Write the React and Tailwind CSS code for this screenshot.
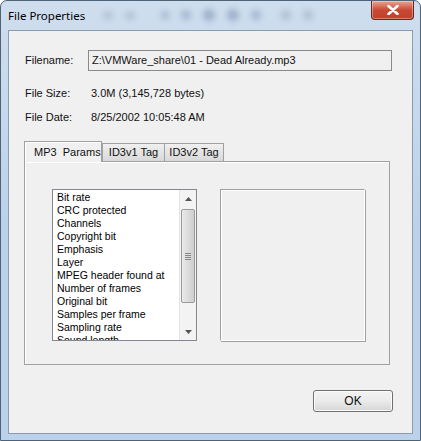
import React from 'react';

const items = [
  'Bit rate',
  'CRC protected',
  'Channels',
  'Copyright bit',
  'Emphasis',
  'Layer',
  'MPEG header found at',
  'Number of frames',
  'Original bit',
  'Samples per frame',
  'Sampling rate',
  'Sound length',
];

const Scrollbar = () => (
  <div className="flex flex-col w-[17px] h-full bg-[#f3f3f3] border-l border-[#e6e6e6]">
    <div className="h-[17px] flex items-center justify-center">
      <svg width="7" height="4" viewBox="0 0 7 4"><path d="M3.5 0L7 4H0z" fill="#555" /></svg>
    </div>
    <div className="mx-[1px] mt-[2px] h-[94px] rounded-[2px] border border-[#9a9a9a] bg-gradient-to-r from-[#eaeaea] via-[#dcdcdc] to-[#cfcfcf] flex flex-col items-center justify-center gap-[1px]">
      <div className="w-[6px] h-[1px] bg-[#888]" />
      <div className="w-[6px] h-[1px] bg-[#888]" />
      <div className="w-[6px] h-[1px] bg-[#888]" />
      <div className="w-[6px] h-[1px] bg-[#888]" />
    </div>
    <div className="flex-1" />
    <div className="h-[17px] flex items-center justify-center">
      <svg width="7" height="4" viewBox="0 0 7 4"><path d="M0 0H7L3.5 4z" fill="#555" /></svg>
    </div>
  </div>
);

const Tab = ({ label, active }) =>
  active ? (
    <div className="relative z-10 w-[78px] h-[21px] -mb-[1px] border border-b-0 border-[#a0a0a0] bg-[#f0f0f0] shadow-[inset_1px_1px_0_#fff] flex items-center pl-[9px] whitespace-pre">
      {label}
    </div>
  ) : (
    <div className="w-[63px] h-[18px] border border-b-0 border-[#a0a0a0] bg-gradient-to-b from-[#f0f0f0] to-[#d8d8d8] flex items-center justify-center whitespace-pre">
      {label}
    </div>
  );

export default function App() {
  return (
    <div
      className="w-[421px] h-[441px] flex flex-col rounded-t-[7px] border border-[#4f6378] bg-gradient-to-b from-[#cfdeee] via-[#bcd2ea] to-[#bcd2ea] overflow-hidden"
      style={{ fontFamily: '"Liberation Sans", Arial, sans-serif' }}
    >
      {/* title bar */}
      <div className="h-[29px] flex items-start">
        <div
          className="pl-[7px] pt-[6px] text-[11.5px] text-black"
          style={{ fontFamily: '"Noto Sans", "Open Sans", sans-serif' }}
        >
          File Properties
        </div>
        <div className="flex items-center gap-[12px] ml-[18px] mt-[8px] opacity-40">
          <div className="w-[10px] h-[7px] rounded-full bg-[#8090a8] blur-[3px]" />
          <div className="w-[10px] h-[7px] rounded-full bg-[#8090a8] blur-[3px]" />
          <div className="w-[8px] h-[8px] rounded-full bg-[#6078a0] blur-[3px] ml-[14px]" />
          <div className="w-[10px] h-[10px] rounded-full bg-[#6078a0] blur-[3px]" />
          <div className="w-[12px] h-[12px] rounded-full bg-[#506890] blur-[3px]" />
          <div className="w-[12px] h-[12px] rounded-full bg-[#506890] blur-[3px]" />
          <div className="w-[10px] h-[10px] rounded-full bg-[#6078a0] blur-[3px]" />
          <div className="w-[10px] h-[10px] rounded-full bg-[#8090a8] blur-[3px] ml-[8px]" />
          <div className="w-[10px] h-[10px] rounded-full bg-[#8090a8] blur-[3px]" />
        </div>
        <div className="flex-1" />
        <div className="mr-[6px] w-[43px] h-[19px] rounded-b-[4px] border border-t-0 border-[#5e2a24] bg-gradient-to-b from-[#e8a493] via-[#c84a34] to-[#c2402a] flex items-center justify-center shadow-[inset_0_0_0_1px_rgba(255,255,255,0.35)]">
          <svg width="12" height="10" viewBox="0 0 12 10">
            <path d="M1.5 1L10.5 9M10.5 1L1.5 9" stroke="#fff" strokeWidth="2.6" strokeLinecap="round" />
          </svg>
        </div>
      </div>

      {/* client area */}
      <div className="mx-[7px] h-[404px] border border-[#8a9cb2] bg-[#f0f0f0] text-[11px] text-[#111] flex flex-col px-[15px] pt-[19px]">
        <div className="flex items-center h-[21px] pl-[1px]">
          <div className="w-[63px]">Filename:</div>
          <div className="w-[304px] h-[21px] border border-[#8a8a8a] bg-[#f0f0f0] pl-[3px] leading-[18px]">
            Z:\VMWare_share\01 - Dead Already.mp3
          </div>
        </div>
        <div className="flex items-center h-[16px] mt-[14px] pl-[1px]">
          <div className="w-[66px]">File Size:</div>
          <div>3.0M (3,145,728 bytes)</div>
        </div>
        <div className="flex items-center h-[16px] mt-[8px] pl-[1px]">
          <div className="w-[66px]">File Date:</div>
          <div>8/25/2002 10:05:48 AM</div>
        </div>

        {/* tabs */}
        <div className="flex items-end mt-[16px]">
          <Tab label="MP3  Params" active />
          <Tab label="ID3v1 Tag" />
          <div className="w-[59px] h-[18px] border border-b-0 border-l-0 border-[#a0a0a0] bg-gradient-to-b from-[#f0f0f0] to-[#d8d8d8] flex items-center justify-center">
            ID3v2 Tag
          </div>
        </div>
        <div className="w-[366px] h-[204px] border border-[#a0a0a0] shadow-[inset_1px_1px_0_#fff] flex gap-[23px] pl-[27px] pt-[27px]">
          <div className="w-[145px] h-[152px] border border-[#828790] bg-white flex">
            <div className="flex-1 overflow-hidden pl-[4px] pt-[1px] text-[10.5px] leading-[13px] text-black">
              {items.map((t) => (
                <div key={t} className="whitespace-nowrap">{t}</div>
              ))}
            </div>
            <Scrollbar />
          </div>
          <div className="w-[145px] h-[152px] border border-[#a0a0a0] border-r-white border-b-white shadow-[inset_1px_1px_0_#fff,1px_1px_0_#a0a0a0]" />
        </div>

        <div className="flex justify-end mt-[25px] pr-[4px]">
          <div className="w-[80px] h-[22px] rounded-[3px] border border-[#707070] bg-gradient-to-b from-[#f2f2f2] via-[#ebebeb] to-[#d6d6d6] shadow-[inset_0_0_0_1px_#fcfcfc] flex items-center justify-center text-[12px]">
            OK
          </div>
        </div>
      </div>
    </div>
  );
}
